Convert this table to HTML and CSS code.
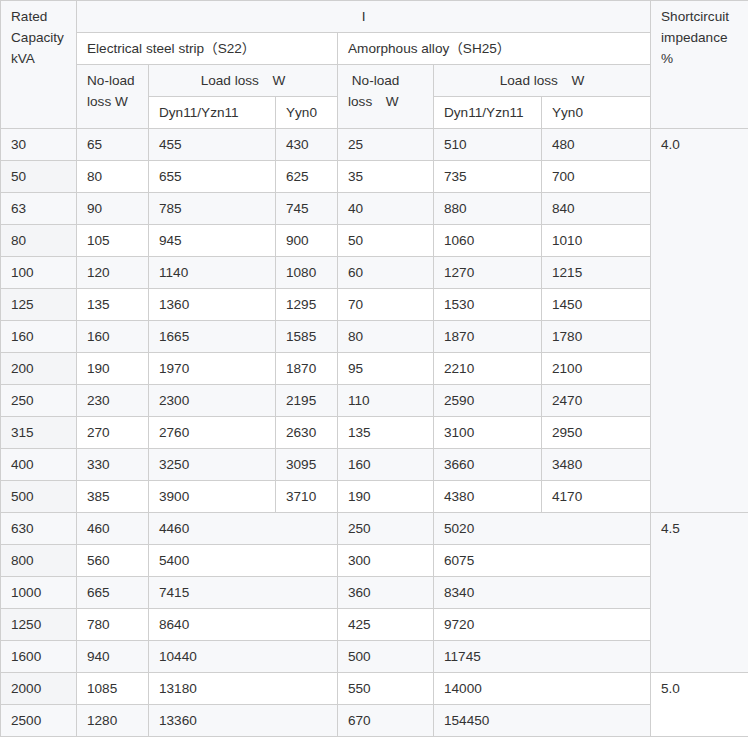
FILE: index.html
```html
<!DOCTYPE html>
<html>
<head>
<meta charset="utf-8">
<link rel="stylesheet" href="styles.css">
</head>
<body>
<table class="spec">
<colgroup>
<col class="c1"><col class="c2"><col class="c3"><col class="c4"><col class="c5"><col class="c6"><col class="c7"><col class="c8">
</colgroup>
<tbody>
<tr><td class="first" rowspan="4">Rated Capacity kVA</td><td colspan="6" class="center">I</td><td rowspan="4">Shortcircuit impedance %</td></tr>
<tr><td colspan="3">Electrical steel strip（S22）</td><td colspan="3">Amorphous alloy（SH25）</td></tr>
<tr><td rowspan="2">No-load loss W</td><td colspan="2" class="center">Load loss　W</td><td rowspan="2">&nbsp;No-load loss　W</td><td colspan="2" class="center">Load loss　W</td></tr>
<tr><td>Dyn11/Yzn11</td><td>Yyn0</td><td>Dyn11/Yzn11</td><td>Yyn0</td></tr>
<tr><td class="first">30</td><td>65</td><td>455</td><td>430</td><td>25</td><td>510</td><td>480</td><td rowspan="12">4.0</td></tr>
<tr><td class="first">50</td><td>80</td><td>655</td><td>625</td><td>35</td><td>735</td><td>700</td></tr>
<tr><td class="first">63</td><td>90</td><td>785</td><td>745</td><td>40</td><td>880</td><td>840</td></tr>
<tr><td class="first">80</td><td>105</td><td>945</td><td>900</td><td>50</td><td>1060</td><td>1010</td></tr>
<tr><td class="first">100</td><td>120</td><td>1140</td><td>1080</td><td>60</td><td>1270</td><td>1215</td></tr>
<tr><td class="first">125</td><td>135</td><td>1360</td><td>1295</td><td>70</td><td>1530</td><td>1450</td></tr>
<tr><td class="first">160</td><td>160</td><td>1665</td><td>1585</td><td>80</td><td>1870</td><td>1780</td></tr>
<tr><td class="first">200</td><td>190</td><td>1970</td><td>1870</td><td>95</td><td>2210</td><td>2100</td></tr>
<tr><td class="first">250</td><td>230</td><td>2300</td><td>2195</td><td>110</td><td>2590</td><td>2470</td></tr>
<tr><td class="first">315</td><td>270</td><td>2760</td><td>2630</td><td>135</td><td>3100</td><td>2950</td></tr>
<tr><td class="first">400</td><td>330</td><td>3250</td><td>3095</td><td>160</td><td>3660</td><td>3480</td></tr>
<tr><td class="first">500</td><td>385</td><td>3900</td><td>3710</td><td>190</td><td>4380</td><td>4170</td></tr>
<tr><td class="first">630</td><td>460</td><td colspan="2">4460</td><td>250</td><td colspan="2">5020</td><td rowspan="5">4.5</td></tr>
<tr><td class="first">800</td><td>560</td><td colspan="2">5400</td><td>300</td><td colspan="2">6075</td></tr>
<tr><td class="first">1000</td><td>665</td><td colspan="2">7415</td><td>360</td><td colspan="2">8340</td></tr>
<tr><td class="first">1250</td><td>780</td><td colspan="2">8640</td><td>425</td><td colspan="2">9720</td></tr>
<tr><td class="first">1600</td><td>940</td><td colspan="2">10440</td><td>500</td><td colspan="2">11745</td></tr>
<tr><td class="first">2000</td><td>1085</td><td colspan="2">13180</td><td>550</td><td colspan="2">14000</td><td rowspan="2">5.0</td></tr>
<tr><td class="first">2500</td><td>1280</td><td colspan="2">13360</td><td>670</td><td colspan="2">154450</td></tr>
</tbody>
</table>
</body>
</html>
```

FILE: styles.css
```css
html, body {
  margin: 0;
  padding: 0;
  background: #ffffff;
}
.spec {
  border-collapse: collapse;
  table-layout: fixed;
  width: 749px;
  font-family: "Liberation Sans", Arial, "Noto Sans CJK SC", sans-serif;
  font-size: 13.6px;
  color: #333333;
}
.c1 { width: 76px; }
.c2 { width: 72px; }
.c3 { width: 127px; }
.c4 { width: 62px; }
.c5 { width: 96px; }
.c6 { width: 108px; }
.c7 { width: 109px; }
.c8 { width: 99px; }
.spec td {
  border: 1px solid #cfcfcf;
  padding: 5px 10px;
  line-height: 21px;
  height: 21px;
  vertical-align: top;
  text-align: left;
  background: #ffffff;
}
.spec tr:nth-child(odd) td {
  background: #f7f8fa;
}
.spec td.first {
  background: #f4f5f7;
}
.spec td.center {
  text-align: center;
}
```
